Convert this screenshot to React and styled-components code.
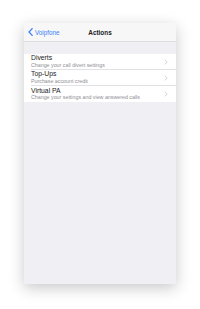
import React from "react";
import styled, { createGlobalStyle } from "styled-components";

const GlobalStyle = createGlobalStyle`
  html, body {
    margin: 0;
    padding: 0;
    background: #ffffff;
    font-family: "Liberation Sans", Arial, sans-serif;
  }
`;

const items = [
  { title: "Diverts", sub: "Change your call divert settings" },
  { title: "Top-Ups", sub: "Purchase account credit" },
  { title: "Virtual PA", sub: "Change your settings and view answered calls" },
];

const App = () => {
  return (
    <Page>
      <GlobalStyle />
      <Phone>
        <NavBar>
          <Back>
            <svg width="5" height="8" viewBox="0 0 5 8">
              <path
                d="M4.2 0.6 L1 4 L4.2 7.4"
                fill="none"
                stroke="#3a82f7"
                strokeWidth="1.3"
                strokeLinecap="round"
                strokeLinejoin="round"
              />
            </svg>
            <BackLabel>Voipfone</BackLabel>
          </Back>
          <NavTitle>Actions</NavTitle>
        </NavBar>
        <Gap />
        <List>
          {items.map((item, i) => (
            <Row key={item.title} last={i === items.length - 1}>
              <RowText>
                <RowTitle>{item.title}</RowTitle>
                <RowSub>{item.sub}</RowSub>
              </RowText>
              <svg width="4" height="6" viewBox="0 0 4 6">
                <path
                  d="M0.8 0.6 L3.2 3 L0.8 5.4"
                  fill="none"
                  stroke="#c7c7cc"
                  strokeWidth="0.8"
                />
              </svg>
            </Row>
          ))}
        </List>
      </Phone>
    </Page>
  );
};

const Page = styled.div`
  padding: 23px 24px 25px;
  width: 200px;
  height: 309px;
  box-sizing: border-box;
`;

const Phone = styled.div`
  width: 152px;
  height: 261px;
  background: #efeff4;
  box-shadow: 0 4px 14px rgba(0, 0, 0, 0.22);
  display: flex;
  flex-direction: column;
  overflow: hidden;
`;

const NavBar = styled.div`
  height: 18px;
  background: #f7f7f7;
  border-bottom: 0.5px solid #dcdce0;
  display: flex;
  align-items: center;
  justify-content: center;
  position: relative;
  flex-shrink: 0;
`;

const Back = styled.div`
  position: absolute;
  left: 4px;
  top: 0;
  bottom: 0;
  display: flex;
  align-items: center;
  gap: 2px;
`;

const BackLabel = styled.span`
  font-size: 6.3px;
  color: #3a82f7;
`;

const NavTitle = styled.span`
  font-size: 6.4px;
  font-weight: bold;
  color: #222;
`;

const Gap = styled.div`
  height: 12px;
  flex-shrink: 0;
`;

const List = styled.div`
  background: #fff;
  display: flex;
  flex-direction: column;
`;

const Row = styled.div`
  height: 16px;
  margin-left: 7px;
  padding-right: 8px;
  display: flex;
  align-items: center;
  justify-content: space-between;
  border-bottom: ${(p) => (p.last ? "none" : "0.5px solid #e2e2e6")};
  box-sizing: border-box;
`;

const RowText = styled.div`
  display: flex;
  flex-direction: column;
  line-height: 1;
`;

const RowTitle = styled.span`
  font-size: 6.8px;
  color: #1a1a1a;
`;

const RowSub = styled.span`
  font-size: 5.3px;
  color: #8e8e93;
  margin-top: 0.5px;
`;

export default App;
